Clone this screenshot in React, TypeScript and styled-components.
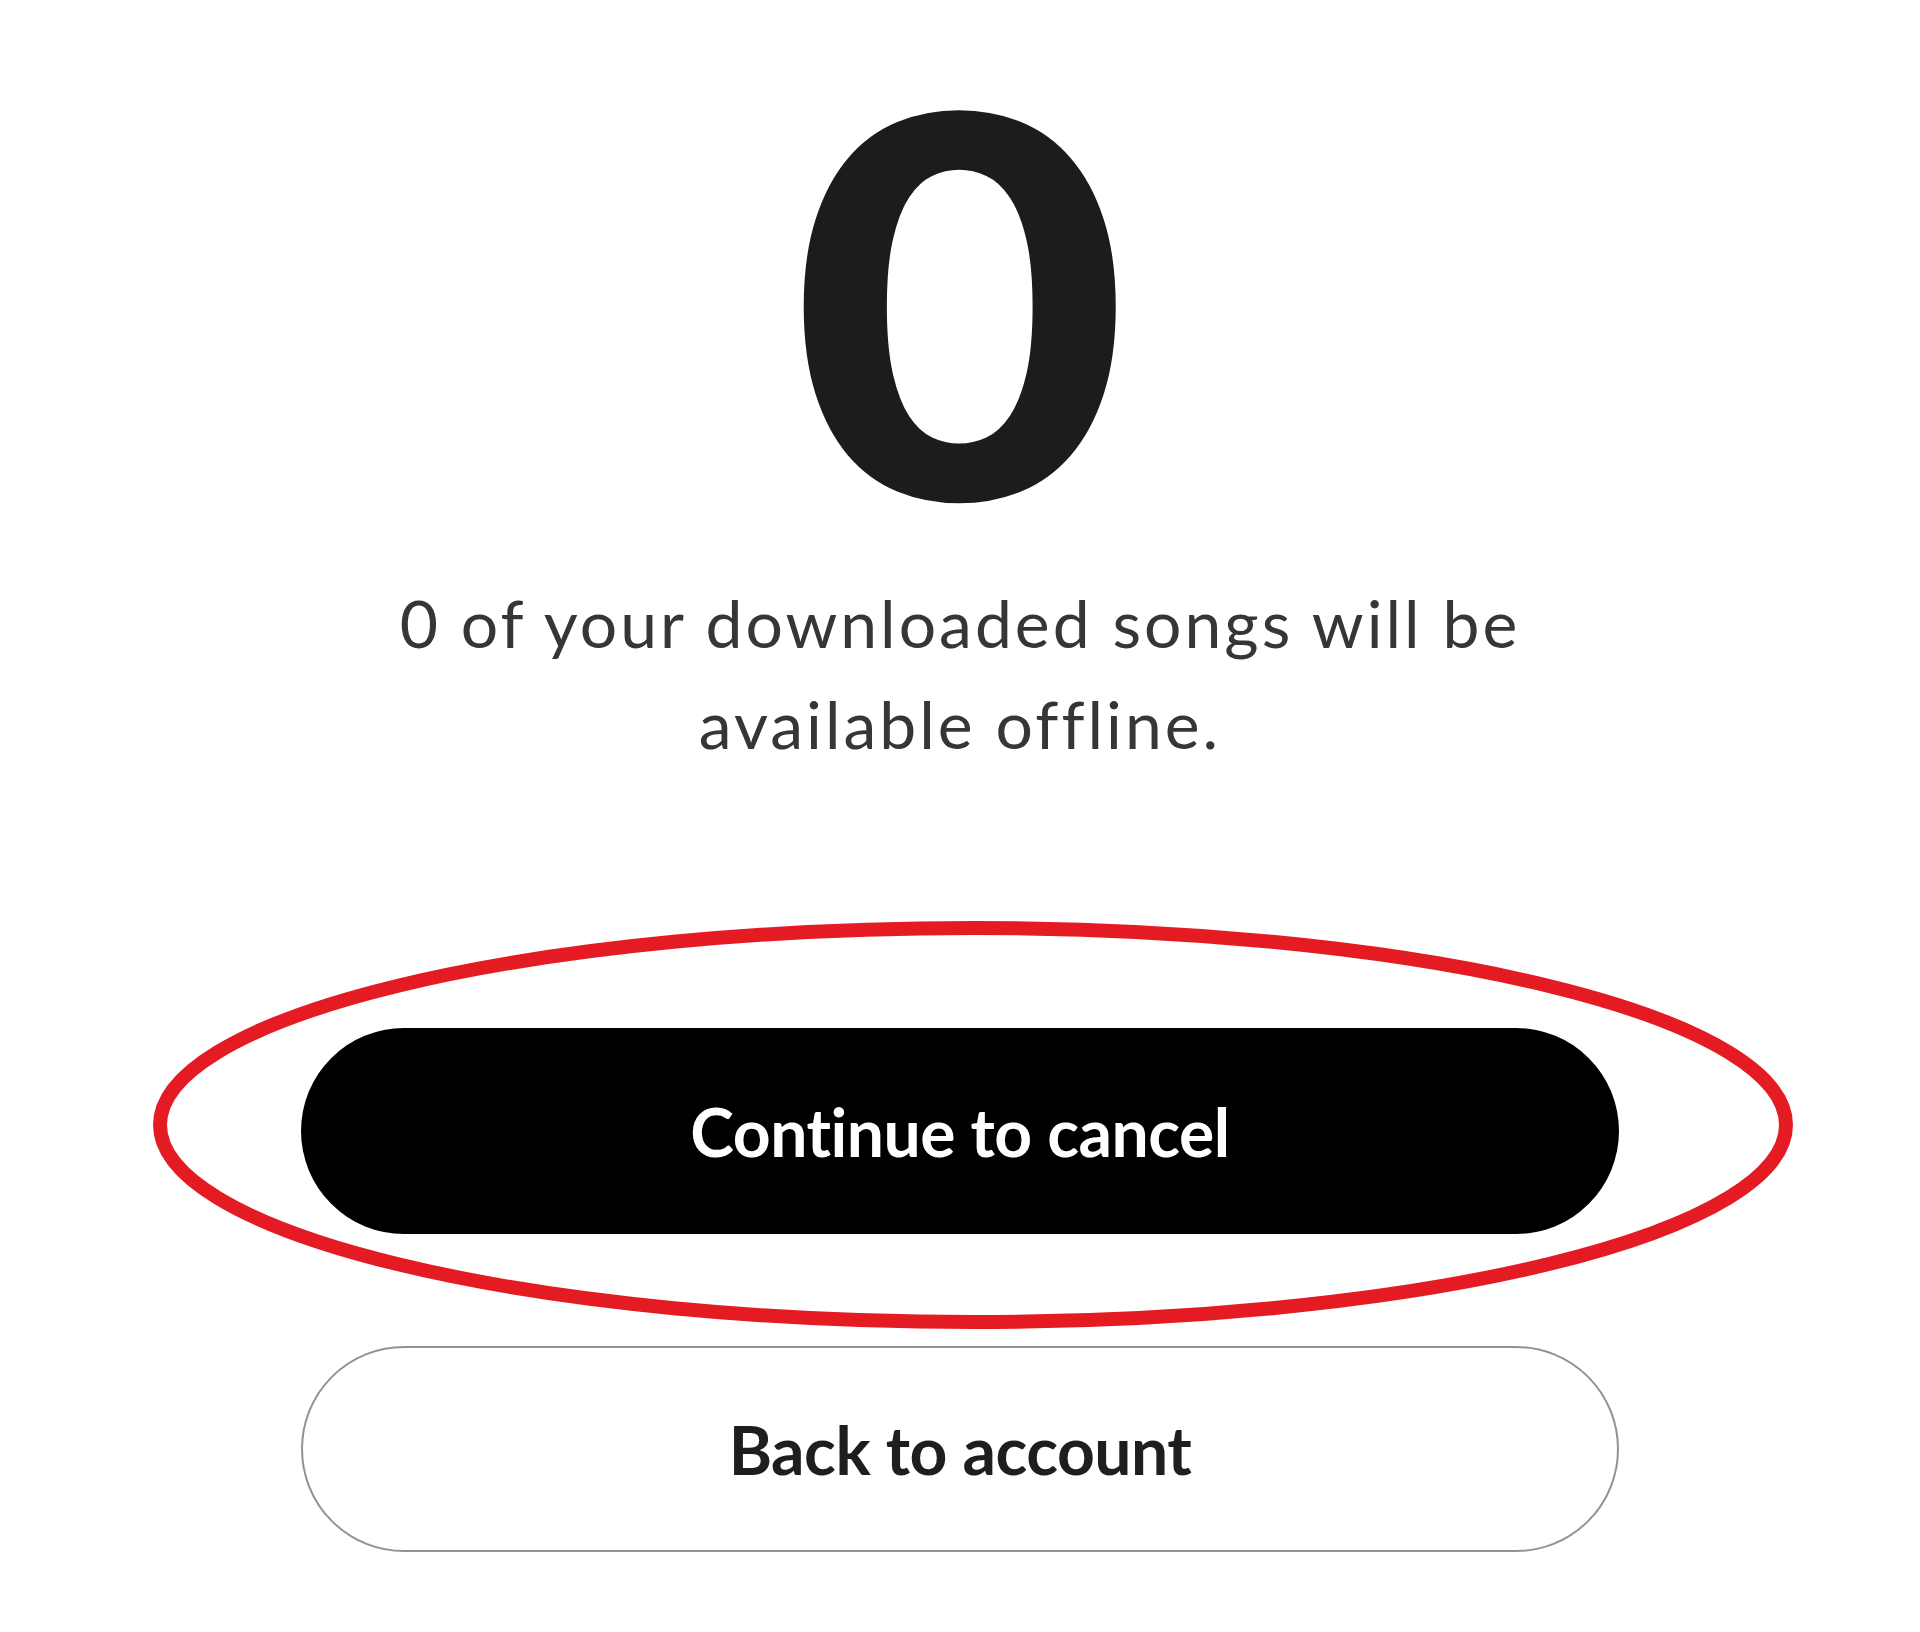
import React from "react";
import styled, { createGlobalStyle } from "styled-components";

const GlobalStyle = createGlobalStyle`
  html, body {
    margin: 0;
    padding: 0;
    background: #ffffff;
  }
  body {
    font-family: "Lato", "Liberation Sans", sans-serif;
  }
`;

const Page = styled.main`
  width: 1920px;
  height: 1632px;
  box-sizing: border-box;
  display: flex;
  flex-direction: column;
  align-items: center;
  padding-top: 29px;
  background: #ffffff;
  overflow: hidden;
`;

const BigCount = styled.div`
  font-family: "Lato", sans-serif;
  font-weight: 900;
  font-size: 530px;
  line-height: 1;
  color: #1c1c1e;
  transform: scaleX(1.1);
`;

const Message = styled.p`
  margin: 13px 0 0;
  font-family: "Lato", sans-serif;
  font-weight: 400;
  font-size: 66px;
  line-height: 101px;
  letter-spacing: 3px;
  color: #363636;
  text-align: center;
`;

const Actions = styled.div`
  margin-top: 254px;
  display: flex;
  flex-direction: column;
  align-items: center;
  gap: 112px;
`;

const Highlight = styled.div`
  position: relative;
`;

const Ring = styled.svg`
  position: absolute;
  left: -148px;
  top: -107px;
  width: 1640px;
  height: 408px;
  pointer-events: none;
  overflow: visible;
`;

const PillButton = styled.button<{ $variant: "solid" | "outline" }>`
  width: 1318px;
  height: 206px;
  border-radius: 103px;
  box-sizing: border-box;
  display: flex;
  align-items: center;
  justify-content: center;
  font-family: "Lato", sans-serif;
  font-weight: 700;
  font-size: 66px;
  letter-spacing: -0.5px;
  cursor: pointer;
  background: ${(p) => (p.$variant === "solid" ? "#000000" : "#ffffff")};
  color: ${(p) => (p.$variant === "solid" ? "#ffffff" : "#1e1e1e")};
  border: ${(p) => (p.$variant === "solid" ? "none" : "2px solid #929292")};
  padding: 0;
`;

export default function App() {
  return (
    <>
      <GlobalStyle />
      <Page>
        <BigCount>0</BigCount>
        <Message>
          0 of your downloaded songs will be
          <br />
          available offline.
        </Message>
        <Actions>
          <Highlight>
            <PillButton $variant="solid">Continue to cancel</PillButton>
            <Ring viewBox="0 0 1640 408">
              <ellipse
                cx="820"
                cy="204"
                rx="813"
                ry="197"
                fill="none"
                stroke="#e41b23"
                strokeWidth="14"
              />
            </Ring>
          </Highlight>
          <PillButton $variant="outline">Back to account</PillButton>
        </Actions>
      </Page>
    </>
  );
}
